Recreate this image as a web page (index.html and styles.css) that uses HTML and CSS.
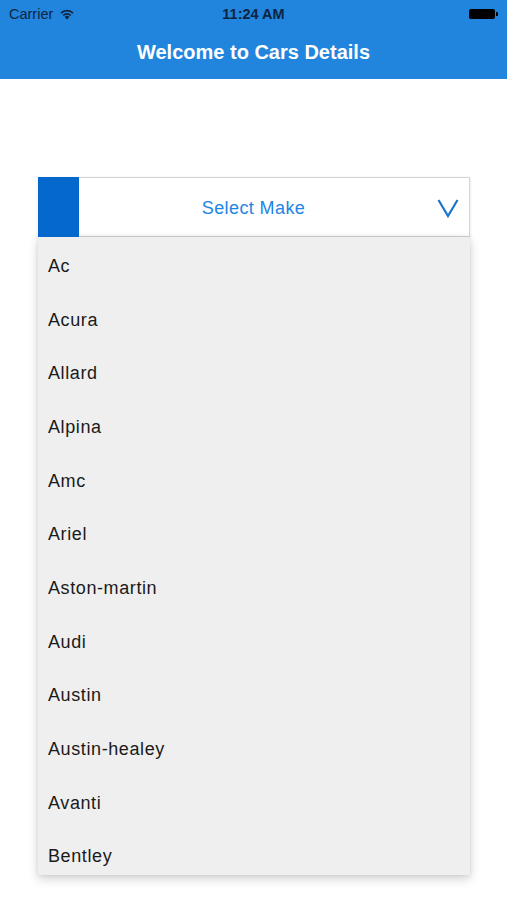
FILE: index.html
```html
<!DOCTYPE html>
<html>
<head>
<meta charset="utf-8">
<link rel="stylesheet" href="styles.css">
</head>
<body>
<header class="topbar">
  <div class="status">
    <div class="status-left">
      <span>Carrier</span>
      <svg class="wifi" width="16" height="12" viewBox="0 0 16 12">
        <path d="M8 11.5 L5.6 8.9 A3.4 3.4 0 0 1 10.4 8.9 Z" fill="#0d2440"/>
        <path d="M3.6 6.9 A6.2 6.2 0 0 1 12.4 6.9 L11.2 8.1 A4.5 4.5 0 0 0 4.8 8.1 Z" fill="#0d2440"/>
        <path d="M1.4 4.6 A9.3 9.3 0 0 1 14.6 4.6 L13.4 5.8 A7.6 7.6 0 0 0 2.6 5.8 Z" fill="#0d2440"/>
      </svg>
    </div>
    <div class="status-time">11:24 AM</div>
    <div class="status-right">
      <span class="battery"></span><span class="battery-tip"></span>
    </div>
  </div>
  <h1 class="title">Welcome to Cars Details</h1>
</header>
<main class="content">
  <div class="dropdown">
    <div class="select">
      <span class="select-accent"></span>
      <span class="select-label">Select Make</span>
      <svg class="chevron" width="22" height="20" viewBox="0 0 22 20">
        <path d="M1.5 2 L11 18 L20.5 2" fill="none" stroke="#1a74cf" stroke-width="2.2"/>
      </svg>
    </div>
    <ul class="options">
      <li>Ac</li>
      <li>Acura</li>
      <li>Allard</li>
      <li>Alpina</li>
      <li>Amc</li>
      <li>Ariel</li>
      <li>Aston-martin</li>
      <li>Audi</li>
      <li>Austin</li>
      <li>Austin-healey</li>
      <li>Avanti</li>
      <li>Bentley</li>
    </ul>
  </div>
</main>
</body>
</html>
```
FILE: styles.css
```css
* { box-sizing: border-box; }
html, body {
  margin: 0;
  padding: 0;
  background: #ffffff;
  font-family: "Liberation Sans", Arial, sans-serif;
  width: 507px;
  height: 900px;
  overflow: hidden;
}
.topbar {
  background: #2185de;
  height: 79px;
  display: flex;
  flex-direction: column;
}
.status {
  height: 28px;
  display: flex;
  align-items: center;
  justify-content: space-between;
  padding: 0 9px 0 9px;
  color: #0d2440;
  font-size: 14.5px;
  position: relative;
}
.status-left {
  display: flex;
  align-items: center;
  gap: 6px;
  width: 120px;
}
.status-time {
  font-weight: bold;
  font-size: 14.5px;
}
.status-right {
  width: 120px;
  display: flex;
  justify-content: flex-end;
  align-items: center;
}
.battery {
  display: inline-block;
  width: 26px;
  height: 10px;
  background: #000;
  border-radius: 2px;
}
.battery-tip {
  display: inline-block;
  width: 2px;
  height: 4px;
  background: #000;
  margin-left: 1px;
  border-radius: 0 1px 1px 0;
}
.title {
  margin: 0;
  flex: 1;
  display: flex;
  align-items: center;
  justify-content: center;
  color: #ffffff;
  font-size: 20px;
  font-weight: bold;
  padding-bottom: 2px;
}
.content {
  padding: 98px 37px 0 38px;
}
.dropdown {
  width: 432px;
}
.select {
  height: 60px;
  display: flex;
  align-items: stretch;
  border: 1px solid #d4d4d4;
  background: #fff;
  box-shadow: 0 1px 3px rgba(0,0,0,0.12);
}
.select-accent {
  width: 41px;
  background: #0568cc;
  margin: -1px 0 -1px -1px;
}
.select-label {
  flex: 1;
  display: flex;
  align-items: center;
  justify-content: center;
  color: #1d85e3;
  font-size: 18px;
  letter-spacing: 0.4px;
  padding-top: 2px;
  padding-right: 9px;
}
.chevron {
  align-self: center;
  margin-right: 10px;
  margin-top: 2px;
}
.options {
  list-style: none;
  margin: 0;
  padding: 0;
  height: 638px;
  overflow: hidden;
  background: #efefef;
  box-shadow: 0 4px 10px rgba(0,0,0,0.18), 0 0 4px rgba(0,0,0,0.08);
}
.options li {
  height: 53.7px;
  display: flex;
  align-items: center;
  padding-left: 10px;
  padding-top: 5px;
  font-size: 18px;
  letter-spacing: 0.6px;
  color: #1a1a1a;
}
```
